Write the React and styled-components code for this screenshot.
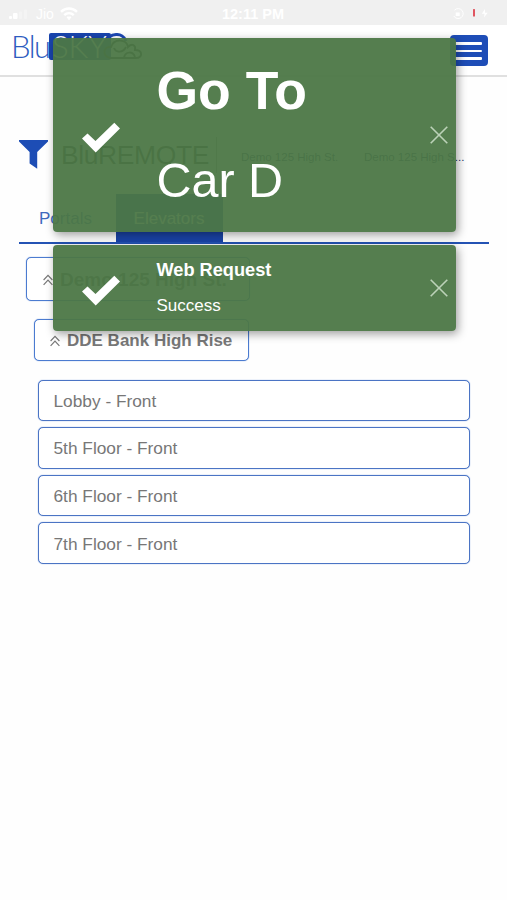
import styled, { createGlobalStyle } from 'styled-components';

const floors = ['Lobby - Front', '5th Floor - Front', '6th Floor - Front', '7th Floor - Front'];

function ChevronsUp() {
  return (
    <ScChevrons viewBox="0 0 10 12">
      <path d="M0.6 6 L5 1.4 L9.4 6 M0.6 10.8 L5 6.2 L9.4 10.8" />
    </ScChevrons>
  );
}

function StatusBar() {
  return (
    <ScStatusBar>
      <ScCarrier>
        <svg width="25" height="10" viewBox="0 0 25 10" fill="#fff">
          <rect x="0" y="7" width="3" height="3" rx="1" />
          <rect x="4" y="4" width="4.5" height="6" rx="1" />
          <rect x="10" y="2.5" width="3" height="7.5" rx="1" opacity="0.3" />
          <rect x="15" y="0.5" width="3" height="9.5" rx="1" opacity="0.3" />
        </svg>
        Jio
        <svg width="18" height="14" viewBox="0 0 18 14" fill="none" stroke="#fff" strokeWidth="2.4">
          <path d="M1 4.8 C5.5 0.4 12.5 0.4 17 4.8" />
          <path d="M4.2 8.2 C7 5.6 11 5.6 13.8 8.2" />
          <path d="M7 10 L9 12.8 L11 10 Z" fill="#fff" strokeWidth="1" />
        </svg>
      </ScCarrier>
      <ScTime>12:11 PM</ScTime>
      <ScBattery>
        <svg width="38" height="14" viewBox="0 0 38 14" fill="none" stroke="#fff">
          <path d="M1.5 3.2 A5 5 0 1 1 0.8 9" />
          <rect x="2.7" y="5.5" width="4" height="3.5" fill="#fff" stroke="none" />
          <rect x="20" y="2" width="2" height="7.5" rx="0.5" fill="#e05560" stroke="none" />
          <path d="M32 2 L28.8 6.8 H31.5 L31 10.5 L34.7 5.8 H32 Z" fill="#fff" stroke="none" />
        </svg>
      </ScBattery>
    </ScStatusBar>
  );
}

function Toast({ large, title, message }) {
  return (
    <ScToast $large={large}>
      <ScCheck viewBox="0 0 40 31">
        <path d="M1 16.6 L6.5 11.4 L14.5 19 L33.3 0.8 L39 6.6 L14.7 30.5 Z" fill="#fff" />
      </ScCheck>
      <ScToastBody>
        <ScToastTitle $large={large}>{title}</ScToastTitle>
        <ScToastMessage $large={large}>{message}</ScToastMessage>
      </ScToastBody>
      <ScClose viewBox="0 0 18 18">
        <path d="M0.7 0.7 L17.3 17.3 M17.3 0.7 L0.7 17.3" />
      </ScClose>
    </ScToast>
  );
}

function App() {
  return (
    <ScPage>
      <GlobalStyle />
      <StatusBar />

      <ScHeader>
        <ScLogo>
          <ScLogoBlu>Blu</ScLogoBlu>
          <ScLogoSky>SKY</ScLogoSky>
          <ScCloud viewBox="0 0 42 28">
            <path d="M4 10 C7 -1 21 -1 24 8" stroke="#1d48b4" strokeWidth="3" />
            <path d="M8 25 C-1 22 2 13 9 14 C12 5 25 6 26 14 C30 10 34 12 33 17 C41 17 41 25 34 25 Z" stroke="#333" strokeWidth="2" />
            <path d="M12 15 C14 20 21 20 24 14 M22 25 C23 18 31 18 33 24" stroke="#333" strokeWidth="2" />
          </ScCloud>
        </ScLogo>
        <ScMenuButton>
          <ScMenuBar />
          <ScMenuBar />
          <ScMenuBar />
        </ScMenuButton>
      </ScHeader>

      <ScTitleRow>
        <ScFilter viewBox="0 0 29 29">
          <path d="M0 0 H29 V1.5 L18.2 12 V28.7 L10.6 23.5 V12 L0 1.5 Z" fill="#1d4db5" />
        </ScFilter>
        <ScTitle>BluREMOTE</ScTitle>
        <ScCrumb>Demo 125 High St.</ScCrumb>
        <ScCrumb>Demo 125 High S...</ScCrumb>
      </ScTitleRow>

      <ScTabs>
        <ScTab $width={97}>Portals</ScTab>
        <ScTab $width={107} $active>Elevators</ScTab>
      </ScTabs>

      <ScContent>
        <ScBuilding>
          <ChevronsUp />
          Demo 125 High St.
        </ScBuilding>
        <ScBank>
          <ChevronsUp />
          DDE Bank High Rise
        </ScBank>
        <ScFloors>
          {floors.map((floor) => (
            <ScFloor key={floor}>{floor}</ScFloor>
          ))}
        </ScFloors>
      </ScContent>

      <ScToasts>
        <Toast large title="Go To" message="Car D" />
        <Toast title="Web Request" message="Success" />
      </ScToasts>
    </ScPage>
  );
}

const GlobalStyle = createGlobalStyle`
  body {
    margin: 0;
    background: #fefefe;
  }

  * {
    box-sizing: border-box;
  }
`;

const ScPage = styled.div`
  position: relative;
  height: 900px;
  overflow: hidden;
  font-family: 'Liberation Sans', sans-serif;
  font-size: 17px;
  color: #777;
`;

const ScStatusBar = styled.div`
  display: grid;
  grid-template-columns: 1fr auto 1fr;
  align-items: center;
  height: 25px;
  padding: 3px 16px 0 9px;
  background: #f0f0f0;
  color: #fff;
  font-size: 14px;
`;

const ScCarrier = styled.div`
  display: flex;
  align-items: center;
  gap: 2px;

  svg + svg {
    margin-left: 4px;
  }
`;

const ScTime = styled.div`
  padding-left: 6px;
  font-weight: 700;
  font-size: 14.5px;
`;

const ScBattery = styled.div`
  display: flex;
  justify-content: flex-end;
`;

const ScHeader = styled.header`
  display: flex;
  justify-content: space-between;
  align-items: flex-start;
  height: 52px;
  padding: 8px 19px 0 11px;
  background: #fff;
  border-bottom: 2px solid #e0e0e0;
`;

const ScLogo = styled.div`
  display: flex;
  font-family: Lato, sans-serif;
  font-size: 31px;
  font-weight: 300;
  line-height: 26px;
`;

const ScLogoBlu = styled.span`
  width: 38px;
  color: #2d5cc0;
  letter-spacing: -1.6px;
`;

const ScLogoSky = styled.span`
  width: 62px;
  height: 27px;
  padding-left: 3px;
  border-radius: 2px;
  background: #1944ad;
  color: #fff;
`;

const ScCloud = styled.svg`
  width: 42px;
  height: 28px;
  margin-left: -9px;
  fill: none;
`;

const ScMenuButton = styled.div`
  display: flex;
  flex-direction: column;
  gap: 5px;
  width: 38px;
  height: 31px;
  margin-top: 2px;
  padding: 7px 6px 0 5px;
  border-radius: 4px;
  background: #1e4db7;
`;

const ScMenuBar = styled.div`
  height: 2.5px;
  border-radius: 1px;
  background: #fff;
`;

const ScTitleRow = styled.div`
  display: flex;
  align-items: center;
  height: 40px;
  margin: 58px 0 0 19px;
`;

const ScFilter = styled.svg`
  width: 29px;
  height: 29px;
  margin-top: -2px;
`;

const ScTitle = styled.div`
  width: 156px;
  margin: 0 24px 0 13px;
  border-right: 1px solid #999;
  font-size: 26.5px;
  line-height: 36px;
  letter-spacing: -0.4px;
  color: #333;
`;

const ScCrumb = styled.div`
  width: 101px;
  margin: 3px 22px 0 0;
  font-size: 11.5px;
  color: #1c3468;
  white-space: nowrap;
`;

const ScTabs = styled.div`
  display: flex;
  height: 50px;
  margin: 19px 18px 0 19px;
  border-bottom: 2px solid #2453b4;
`;

const ScTab = styled.div`
  width: ${({ $width }) => $width}px;
  padding-right: ${({ $active }) => ($active ? 1 : 4)}px;
  text-align: center;
  line-height: 49px;
  color: ${({ $active }) => ($active ? '#fff' : '#3e69bd')};
  background: ${({ $active }) => ($active ? '#1a44a8' : 'transparent')};
`;

const ScContent = styled.main`
  display: flex;
  flex-direction: column;
  align-items: flex-start;
  padding: 13px 37px 0 26px;
`;

const ScBox = styled.div`
  display: flex;
  align-items: center;
  border: 1px solid #4b7bd0;
  border-radius: 5px;
  background: #fff;
  box-shadow: 0 0 1px #4b7bd0;
`;

const ScBuilding = styled(ScBox)`
  width: 224px;
  height: 44px;
  padding: 2px 0 0 16px;
  font-weight: 700;
  font-size: 19px;
  color: #666;
`;

const ScBank = styled(ScBox)`
  width: 215px;
  height: 42px;
  margin: 18px 0 0 8px;
  padding: 2px 0 0 15px;
  font-weight: 700;
  font-size: 17px;
`;

const ScChevrons = styled.svg`
  width: 10px;
  height: 12px;
  margin-right: 7px;
  fill: none;
  stroke: #777;
  stroke-width: 1.2;
`;

const ScFloors = styled.div`
  display: flex;
  flex-direction: column;
  align-self: stretch;
  gap: 6px;
  margin: 18.5px 0 0 11.5px;
`;

const ScFloor = styled(ScBox)`
  height: 41.6px;
  padding: 2px 0 0 15px;
  font-size: 17.3px;
  border-color: #4b74c4;
`;

const ScToasts = styled.div`
  position: absolute;
  top: 38px;
  left: 52.5px;
  display: flex;
  flex-direction: column;
  gap: 13px;
  width: 403px;
`;

const ScToast = styled.div`
  display: flex;
  align-items: center;
  height: ${({ $large }) => ($large ? 194 : 86)}px;
  padding: 0 8px 0 28.5px;
  border-radius: 4px;
  background: rgba(76, 119, 70, 0.95);
  box-shadow: 2px 3px 10px rgba(0, 0, 0, 0.38);
  color: #fff;
`;

const ScCheck = styled.svg`
  width: 40px;
  height: 31px;
  margin-top: 4px;
`;

const ScToastBody = styled.div`
  flex: 1;
  padding-left: 35.5px;
`;

const ScToastTitle = styled.div`
  font-weight: 700;
  font-size: ${({ $large }) => ($large ? 53.5 : 18.2)}px;
  line-height: ${({ $large }) => ($large ? 90 : 35)}px;
`;

const ScToastMessage = styled.div`
  font-size: ${({ $large }) => ($large ? 48.5 : 17)}px;
  line-height: ${({ $large }) => ($large ? 88 : 35)}px;
`;

const ScClose = styled.svg`
  width: 18px;
  height: 18px;
  fill: none;
  stroke: #bcd2b8;
  stroke-width: 1.6;
`;

export default App;
